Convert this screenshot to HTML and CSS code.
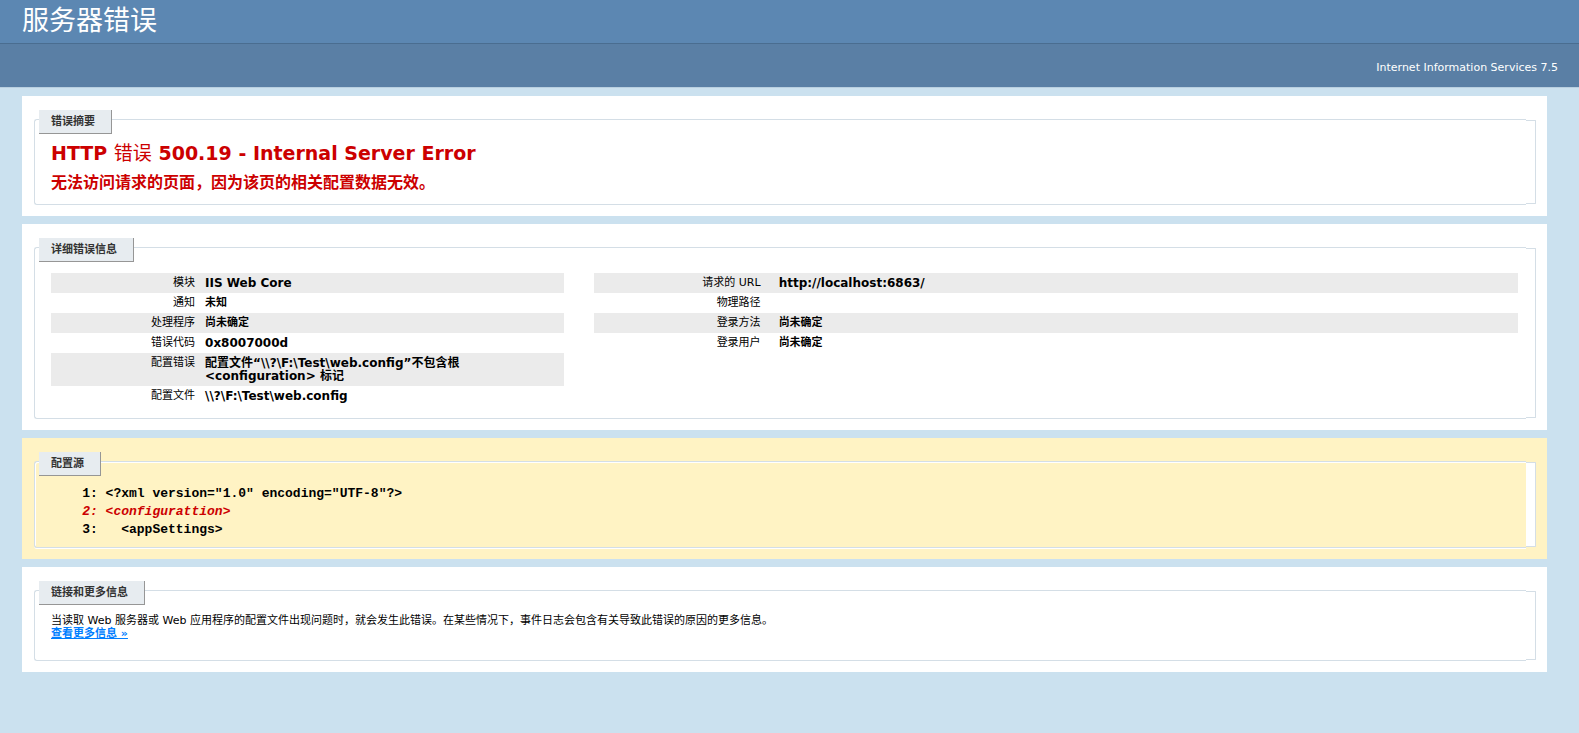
FILE: index.html
```html
<!DOCTYPE html>
<html lang="zh-CN">
<head>
<meta charset="utf-8">
<title>服务器错误</title>
<link rel="stylesheet" href="styles.css">
</head>
<body>
<header class="page-header">
  <h1 class="page-title">服务器错误</h1>
  <div class="server-version">Internet Information Services 7.5</div>
</header>
<main class="content">
  <section class="card">
    <div class="frame frame-summary">
      <h4 class="tab">错误摘要</h4>
      <h2 class="error-title">HTTP <span class="cjk">错误</span> 500.19 - Internal Server Error</h2>
      <h3 class="error-text">无法访问请求的页面，因为该页的相关配置数据无效。</h3>
    </div>
  </section>
  <section class="card">
    <div class="frame frame-details">
      <h4 class="tab">详细错误信息</h4>
      <div class="details">
        <table class="detail-table">
          <tr><th scope="row">模块</th><td>IIS Web Core</td></tr>
          <tr><th scope="row">通知</th><td class="zh">未知</td></tr>
          <tr><th scope="row">处理程序</th><td class="zh">尚未确定</td></tr>
          <tr><th scope="row">错误代码</th><td>0x8007000d</td></tr>
          <tr><th scope="row">配置错误</th><td>配置文件“\\?\F:\Test\web.config”不包含根 &lt;configuration&gt; 标记</td></tr>
          <tr><th scope="row">配置文件</th><td>\\?\F:\Test\web.config</td></tr>
        </table>
        <table class="detail-table request-table">
          <tr><th scope="row">请求的 URL</th><td>http://localhost:6863/</td></tr>
          <tr><th scope="row">物理路径</th><td></td></tr>
          <tr><th scope="row">登录方法</th><td class="zh">尚未确定</td></tr>
          <tr><th scope="row">登录用户</th><td class="zh">尚未确定</td></tr>
        </table>
      </div>
    </div>
  </section>
  <section class="card card-source">
    <div class="frame frame-source">
      <h4 class="tab">配置源</h4>
<pre class="source">    1: &lt;?xml version="1.0" encoding="UTF-8"?&gt;
<em class="source-error">    2: &lt;configurattion&gt;</em>
    3:   &lt;appSettings&gt;</pre>
    </div>
  </section>
  <section class="card">
    <div class="frame frame-links">
      <h4 class="tab">链接和更多信息</h4>
      <p class="note">当读取 Web 服务器或 Web 应用程序的配置文件出现问题时，就会发生此错误。在某些情况下，事件日志会包含有关导致此错误的原因的更多信息。</p>
      <a class="more" href="#">查看更多信息 »</a>
    </div>
  </section>
</main>
</body>
</html>
```

FILE: styles.css
```css
* {
  box-sizing: border-box;
}

body {
  margin: 0;
  background: #cbe1ef;
  color: #000;
  font: 11px/13px "DejaVu Sans", "Noto Sans CJK SC", sans-serif;
}

h1, h2, h3, h4, p, pre {
  margin: 0;
}

.page-header {
  background: #5c87b2;
  color: #fff;
  border-bottom: 1px solid #b9cfe0;
}

.page-title {
  height: 43px;
  padding-left: 22px;
  font: 27px/38px "Noto Sans CJK SC", sans-serif;
}

.server-version {
  padding: 17px 21px 12px;
  border-top: 1px solid #4a6d90;
  background: #5a7fa5;
  line-height: 14px;
  text-align: right;
}

.content {
  display: flex;
  flex-direction: column;
  gap: 8px;
  padding: 8px 32px 8px 22px;
}

.card {
  padding: 23px 21px 11px 12px;
  background: #fff;
}

.card-source {
  background: #fff3c4;
}

/* Left part of the rounded outline; the right edge is the narrow strip below. */
.frame {
  position: relative;
  padding: 0 8px 0 16px;
  border: 1px solid #d4dee6;
  border-right: 0;
  border-radius: 3px 0 0 3px;
}

.frame::after {
  content: "";
  position: absolute;
  top: 0;
  bottom: 0;
  left: 100%;
  width: 9px;
  border: 1px solid #d4dee6;
  border-left: 0;
  border-radius: 0 1px 1px 0;
}

.frame-source {
  box-shadow: inset 1px 1px #fff, 0 1px #fff;
}

.frame-source::after {
  background: #fff;
}

.tab {
  width: fit-content;
  margin: -10px 0 0 -12px;
  padding: 5px 16px 5px 12px;
  border-right: 1px solid #969696;
  border-bottom: 1px solid #969696;
  background: #e7ecf0;
  color: #333;
}

.frame-summary {
  padding-bottom: 9px;
}

.error-title {
  margin-top: 7px;
  color: #c00;
  font-size: 19px;
  line-height: 24px;
}

.cjk {
  font-weight: normal;
}

.error-text {
  margin-top: 6px;
  color: #c00;
  font-size: 16px;
  line-height: 24px;
}

.frame-details {
  padding-bottom: 12px;
}

.details {
  display: grid;
  grid-template-columns: 35fr 63fr;
  column-gap: 2%;
  align-items: start;
  margin-top: 11px;
}

.detail-table {
  width: 100%;
  border-collapse: collapse;
  table-layout: fixed;
}

.detail-table tr:nth-child(odd) {
  background: #ebebeb;
}

.detail-table th {
  width: 30%;
  padding: 3px 10px 4px 0;
  font-weight: normal;
  text-align: right;
  vertical-align: top;
}

.detail-table td {
  padding: 4px 30px 3px 0;
  font-size: 12px;
  font-weight: bold;
  vertical-align: top;
}

.detail-table td.zh {
  padding: 3px 30px 4px 0;
  font-size: 11px;
}

.detail-table.request-table th {
  width: 20%;
  padding-right: 18px;
}

.frame-source {
  padding-bottom: 8px;
}

.source {
  margin-top: 9px;
  font: bold 13px/18px "Liberation Mono", monospace;
}

.source-error {
  color: #c00;
}

.frame-links {
  padding-bottom: 20px;
}

.note {
  margin-top: 9px;
}

.more {
  color: #007eff;
  font-weight: bold;
}
```
